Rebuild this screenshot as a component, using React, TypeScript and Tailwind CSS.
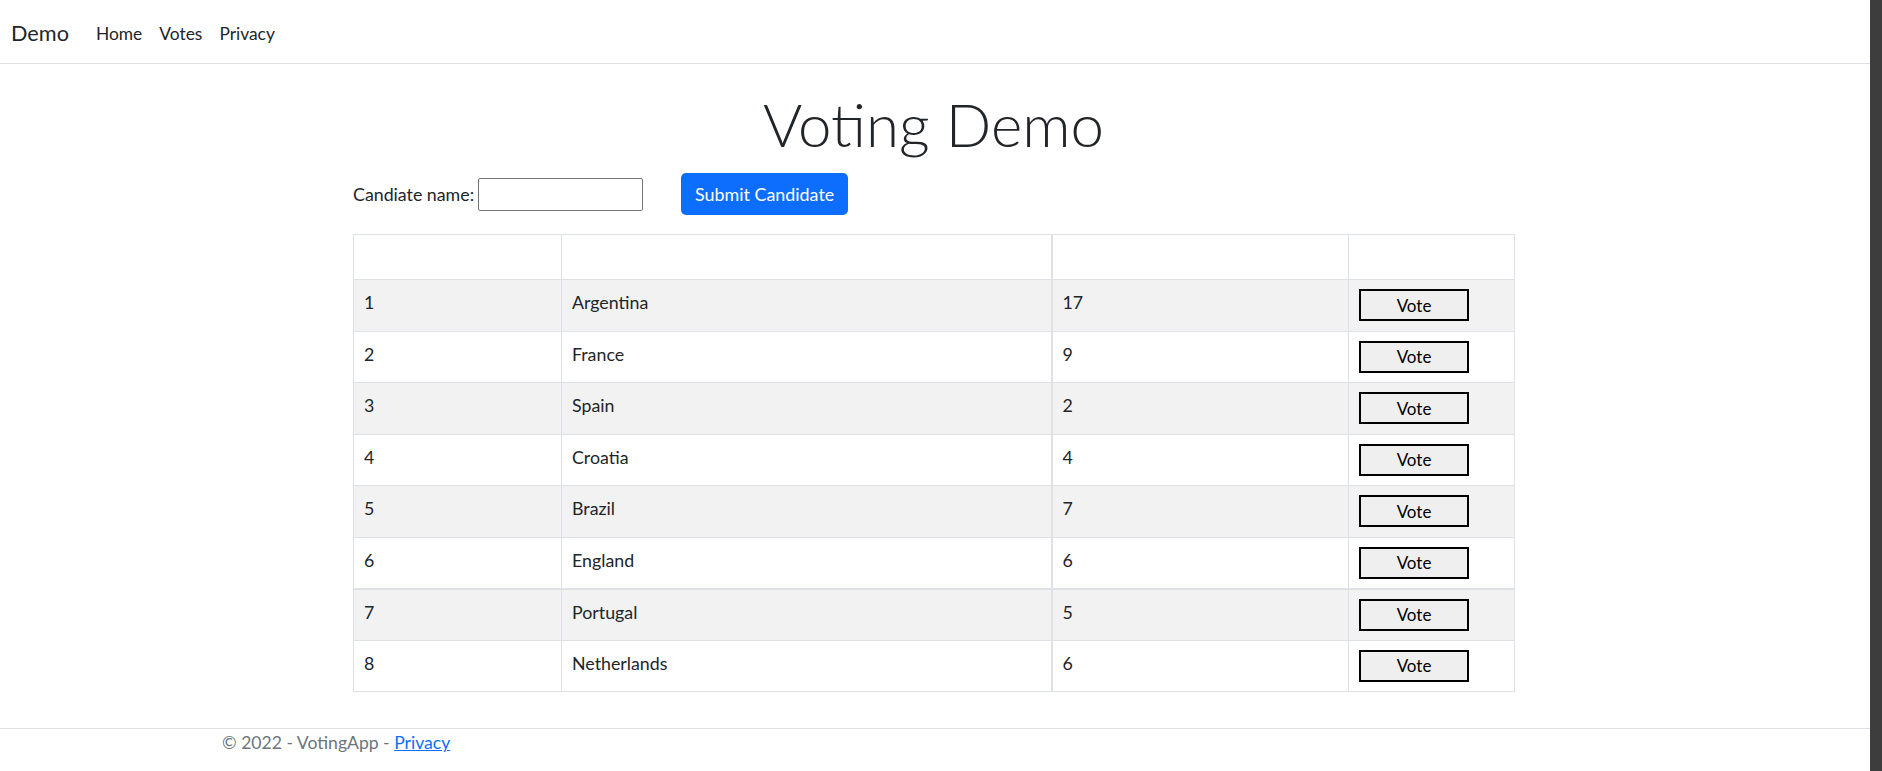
const CANDIDATES: [number, string, number][] = [
  [1, "Argentina", 17],
  [2, "France", 9],
  [3, "Spain", 2],
  [4, "Croatia", 4],
  [5, "Brazil", 7],
  [6, "England", 6],
  [7, "Portugal", 5],
  [8, "Netherlands", 6],
];

function Navbar() {
  return (
    <nav className="h-[64px] shrink-0 border-b border-[#dee2e6] flex items-center pl-[11px] pt-[4px] text-[#212529]">
      <span className="text-[21.7px] leading-none mr-[27px]">Demo</span>
      <div className="flex items-center gap-[17px] text-[17.4px] leading-none">
        <a className="cursor-pointer">Home</a>
        <a className="cursor-pointer">Votes</a>
        <a className="cursor-pointer">Privacy</a>
      </div>
    </nav>
  );
}

function CandidateForm() {
  return (
    <div className="flex items-center h-[42px] mt-[9px]">
      <label className="text-[17.8px] text-[#212529] mr-[4px]">Candiate name:</label>
      <input className="w-[165px] h-[33px] border border-[#767676] rounded-[2px] px-1 outline-none" />
      <button className="ml-[38px] w-[167px] h-[42px] rounded-[5px] bg-[#0d6efd] text-white text-[17.9px]">
        Submit Candidate
      </button>
    </div>
  );
}

function VotesTable() {
  return (
    <table className="mt-[19px] w-[1161px] table-fixed border-collapse text-[17.8px] text-[#212529]">
      <colgroup>
        <col className="w-[208px]" />
        <col className="w-[490px]" />
        <col className="w-[297px]" />
        <col className="w-[166px]" />
      </colgroup>
      <thead>
        <tr className="h-[45px]">
          <th className="border border-[#dee2e6]" />
          <th className="border border-[#dee2e6] border-r-2" />
          <th className="border border-[#dee2e6]" />
          <th className="border border-[#dee2e6]" />
        </tr>
      </thead>
      <tbody>
        {CANDIDATES.map(([id, name, votes], i) => (
          <tr
            key={id}
            className={`h-[51.5px] ${i % 2 === 0 ? "bg-[#f2f2f2]" : "bg-white"} ${
              i === 5 ? "border-b-2" : ""
            } border-[#dee2e6]`}
          >
            <td className="border border-[#dee2e6] px-[10px] align-top pt-[8px] leading-[29px]">{id}</td>
            <td className="border border-[#dee2e6] border-r-2 px-[10px] align-top pt-[8px] leading-[29px]">
              {name}
            </td>
            <td className="border border-[#dee2e6] px-[10px] align-top pt-[8px] leading-[29px]">{votes}</td>
            <td className="border border-[#dee2e6] px-[10px] align-top pt-[9px]">
              <button className="w-[110px] h-[32px] border-2 border-black bg-[#efefef] text-[17px] text-black leading-none">
                Vote
              </button>
            </td>
          </tr>
        ))}
      </tbody>
    </table>
  );
}

export default function App() {
  return (
    <div
      className="flex w-full h-screen overflow-hidden bg-white"
      style={{ fontFamily: "Lato, 'Noto Sans', sans-serif" }}
    >
      <div className="flex-1 flex flex-col min-w-0">
        <Navbar />
        <main className="flex-1 w-[1161px] ml-[353px]">
          <h1 className="text-center text-[60px] font-light leading-[80px] mt-[20px] text-[#212529]">
            Voting Demo
          </h1>
          <CandidateForm />
          <VotesTable />
        </main>
        <footer className="h-[43px] border-t border-[#dee2e6] pl-[222px] pt-0 text-[17.6px] leading-[28px] text-[#6c757d]">
          © 2022 - VotingApp - <a className="text-[#0d6efd] underline cursor-pointer">Privacy</a>
        </footer>
      </div>
      <div className="w-[12px] h-full bg-[#3d3d3d] shrink-0" />
    </div>
  );
}
